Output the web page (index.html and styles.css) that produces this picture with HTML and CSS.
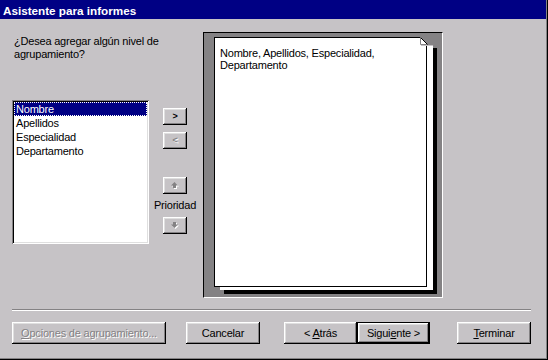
FILE: index.html
```html
<!DOCTYPE html>
<html>
<head>
  <meta charset="UTF-8">
  <title>Asistente para informes</title>
  <link rel="stylesheet" href="styles.css">
</head>
<body>
  <div class="ventana">
    <div class="marco">
      <div class="titulo">Asistente para informes</div>

      <div class="contenido">
        <div class="columna-campos">
          <p class="pregunta">¿Desea agregar algún nivel de<br>agrupamiento?</p>
          <ul class="lista">
            <li class="seleccionado">Nombre</li>
            <li>Apellidos</li>
            <li>Especialidad</li>
            <li>Departamento</li>
          </ul>
        </div>

        <div class="columna-botones">
          <div class="grupo-mover">
            <button class="boton-chico">&gt;</button>
            <button class="boton-chico" disabled>&lt;</button>
          </div>
          <div class="grupo-prioridad">
            <button class="boton-chico" disabled>
              <svg width="8" height="7" viewBox="0 0 8 7">
                <polygon points="4.5,1 8,4.5 6,4.5 6,7 3,7 3,4.5 1,4.5" fill="#fff"/>
                <polygon points="3.5,0 7,3.5 5,3.5 5,6 2,6 2,3.5 0,3.5" fill="#848284"/>
              </svg>
            </button>
            <span class="prioridad">Prioridad</span>
            <button class="boton-chico" disabled>
              <svg width="8" height="7" viewBox="0 0 8 7">
                <polygon points="3,1 6,1 6,3.5 8,3.5 4.5,7 1,3.5 3,3.5" fill="#fff"/>
                <polygon points="2,0 5,0 5,2.5 7,2.5 3.5,6 0,2.5 2,2.5" fill="#848284"/>
              </svg>
            </button>
          </div>
        </div>

        <div class="vista">
          <div class="hoja">
            Nombre, Apellidos, Especialidad, Departamento
            <svg class="esquina" width="22" height="14" viewBox="0 0 22 14">
              <path d="M4 0 H22 V11 H17 V9 H11 V7 Z" fill="#848284"/>
              <polygon points="4,0 11,7 4,7" fill="#fff"/>
              <rect x="5" y="8" width="12" height="1" fill="#c6c3c6"/>
              <path d="M4.5 0.5 L11.5 7.5" stroke="#000" stroke-width="1"/>
              <path d="M4.5 0.5 V7.5 H11" stroke="#848284" stroke-width="1" fill="none"/>
            </svg>
          </div>
        </div>
      </div>

      <div class="separador"></div>

      <div class="botones">
        <button class="boton ancho-opciones" disabled><u>O</u>pciones de agrupamiento...</button>
        <button class="boton ancho-cancelar">Cancelar</button>
        <button class="boton ancho-atras">&lt; <u>A</u>trás</button>
        <button class="boton ancho-siguiente predeterminado">Sigui<u>e</u>nte &gt;</button>
        <button class="boton ancho-terminar"><u>T</u>erminar</button>
      </div>
    </div>
  </div>
</body>
</html>
```

FILE: styles.css
```css
body {
  margin: 0;
  font-family: "Liberation Sans", Arial, sans-serif;
  font-size: 11px;
  letter-spacing: -0.2px;
  color: #000;
}

.ventana {
  width: 548px;
  height: 360px;
  box-sizing: border-box;
  border-right: 1px solid #000;
  border-bottom: 1px solid #000;
}

.marco {
  height: 100%;
  box-sizing: border-box;
  border-right: 1px solid #848284;
  border-bottom: 1px solid #848284;
  background-color: #c6c3c6;
}

.titulo {
  height: 17px;
  padding: 2px 0 0 3px;
  line-height: 18px;
  background-color: #000084;
  color: #fff;
  font-weight: bold;
  font-size: 11.7px;
  letter-spacing: 0;
  overflow: hidden;
}

/* zona central */
.contenido {
  display: flex;
  padding: 13px 0 0 12px;
}

.columna-campos {
  width: 137px;
}

.pregunta {
  margin: 3px 0 0 2px;
  line-height: 13px;
  white-space: nowrap;
}

.lista {
  width: 137px;
  height: 144px;
  box-sizing: border-box;
  margin: 39px 0 0 0;
  padding: 2px;
  list-style: none;
  background-color: #fff;
  box-shadow: inset 1px 1px #848284, inset -1px -1px #fff, inset 2px 2px #000, inset -2px -2px #dfdfdf;
}

.lista li {
  height: 14px;
  box-sizing: border-box;
  padding: 1px 0 0 2px;
  line-height: 13px;
}

.lista li.seleccionado {
  background-color: #000084;
  color: #fff;
  outline: 1px dotted #fff;
  outline-offset: -1px;
}

.columna-botones {
  width: 44px;
  margin-left: 4px;
  padding-top: 76px;
  display: flex;
  flex-direction: column;
  align-items: center;
}

.grupo-mover {
  display: flex;
  flex-direction: column;
  gap: 7px;
}

.grupo-prioridad {
  margin-top: 28px;
  display: flex;
  flex-direction: column;
  align-items: center;
  gap: 5px;
}

.prioridad {
  line-height: 13px;
}

.vista {
  width: 240px;
  height: 266px;
  box-sizing: border-box;
  margin-left: 6px;
  padding: 4px 0 0 10px;
  border-top: 1px solid #000;
  border-left: 1px solid #000;
  border-right: 1px solid #fff;
  border-bottom: 1px solid #fff;
  background-color: #848284;
}

.hoja {
  position: relative;
  width: 213px;
  height: 250px;
  box-sizing: border-box;
  padding: 9px 5px;
  border: 1px solid #000;
  background-color: #fff;
  line-height: 12px;
  box-shadow: 6px 3px 0 #fff, 10px 7px 0 #000;
}

.esquina {
  position: absolute;
  top: -1px;
  right: -12px;
  display: block;
}

/* botones */
button {
  padding: 0;
  border: none;
  background-color: #c6c3c6;
  font-family: "Liberation Sans", Arial, sans-serif;
  font-size: 11px;
  letter-spacing: -0.2px;
  color: #000;
  box-shadow: inset -1px -1px #000, inset 1px 1px #fff, inset -2px -2px #848284, inset 2px 2px #dfdfdf;
}

button:disabled {
  color: #848284;
  text-shadow: 1px 1px 0 #fff;
}

.boton-chico {
  width: 24px;
  height: 17px;
  padding-bottom: 1px;
  display: flex;
  align-items: center;
  justify-content: center;
  font-weight: bold;
  font-size: 9px;
  line-height: 10px;
}

.boton-chico svg {
  display: block;
}

.separador {
  width: 519px;
  margin: 11px 0 0 12px;
  border-top: 1px solid #848284;
  border-bottom: 1px solid #fff;
}

.botones {
  display: flex;
  margin-top: 11px;
  padding-left: 12px;
}

.boton {
  height: 22px;
  line-height: 13px;
}

.predeterminado {
  box-shadow: inset -2px -2px #000, inset 1px 1px #000, inset 2px 2px #fff, inset -3px -3px #848284, inset 3px 3px #dfdfdf;
}

.ancho-opciones {
  width: 154px;
}

.ancho-cancelar {
  width: 74px;
  margin-left: 20px;
}

.ancho-atras {
  width: 73px;
  margin-left: 24px;
}

.ancho-siguiente {
  width: 73px;
}

.ancho-terminar {
  width: 74px;
  margin-left: 27px;
}
```
